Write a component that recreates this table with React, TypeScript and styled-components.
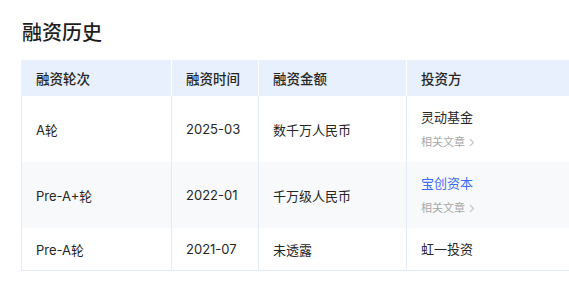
import React from "react";
import styled, { createGlobalStyle } from "styled-components";

const Global = createGlobalStyle`
  html, body { margin: 0; padding: 0; background: #fff; overflow: hidden; }
  body { font-family: Inter, "Noto Sans CJK SC", sans-serif; color: #222; }
`;

const Page = styled.div`
  padding: 19px 0 0 21px;
  width: 640px;
`;

const Title = styled.h2`
  margin: 0 0 0 1px;
  font-size: 20px;
  line-height: 26px;
  font-weight: 500;
  color: #1e1e1e;
  font-family: "Noto Sans CJK SC", sans-serif;
`;

const Table = styled.div`
  margin-top: 15px;
  display: grid;
  grid-template-columns: 149px 87px 148px 200px;
  border-left: 1px solid #e3ebf8;
  border-bottom: 1px solid #e3ebf8;
  width: 584px;
`;

const HeadCell = styled.div<{ $first?: boolean }>`
  height: 36px;
  display: flex;
  align-items: center;
  margin-left: ${(p) => (p.$first ? "-1px" : "0")};
  padding: 0 14px 0 ${(p) => (p.$first ? "15px" : "14px")};
  border-left: ${(p) => (p.$first ? "none" : "1px solid #fff")};
  background: #e8f0fd;
  font-family: "Noto Sans CJK SC", sans-serif;
  font-size: 13.5px;
  font-weight: 500;
  color: #262626;
`;

const Cell = styled.div<{ $first?: boolean; $shade?: boolean; $tall?: boolean }>`
  min-height: ${(p) => (p.$tall ? "66px" : "42px")};
  box-sizing: border-box;
  display: flex;
  flex-direction: column;
  justify-content: center;
  padding: 0 14px;
  border-left: ${(p) => (p.$first ? "none" : "1px solid #e3ebf8")};
  background: ${(p) => (p.$shade ? "#f7f9fa" : "#fff")};
  font-size: 13px;
  color: #262626;
`;

const Name = styled.span<{ $link?: boolean }>`
  font-size: 13px;
  line-height: 18px;
  color: ${(p) => (p.$link ? "#3e6df3" : "#262626")};
`;

const Article = styled.span`
  margin-top: 8px;
  font-size: 11px;
  line-height: 16px;
  color: #a8a8a8;
  display: flex;
  align-items: center;
  gap: 4px;
`;

const Chevron = () => (
  <svg width="6" height="9" viewBox="0 0 6 9" fill="none">
    <path d="M1 1l3.5 3.5L1 8" stroke="#c6c6c6" strokeWidth="1.1" />
  </svg>
);

type Row = { round: string; date: string; amount: string; investor: string; link?: boolean; article?: boolean };

const rows: Row[] = [
  { round: "A轮", date: "2025-03", amount: "数千万人民币", investor: "灵动基金", article: true },
  { round: "Pre-A+轮", date: "2022-01", amount: "千万级人民币", investor: "宝创资本", link: true, article: true },
  { round: "Pre-A轮", date: "2021-07", amount: "未透露", investor: "虹一投资" },
];

export default function App() {
  return (
    <>
      <Global />
      <Page>
        <Title>融资历史</Title>
        <Table>
          <HeadCell $first>融资轮次</HeadCell>
          <HeadCell>融资时间</HeadCell>
          <HeadCell>融资金额</HeadCell>
          <HeadCell>投资方</HeadCell>
          {rows.map((r, i) => {
            const shade = i === 1;
            const tall = !!r.article;
            return (
              <React.Fragment key={r.round}>
                <Cell $first $shade={shade} $tall={tall}>{r.round}</Cell>
                <Cell $shade={shade} $tall={tall}>{r.date}</Cell>
                <Cell $shade={shade} $tall={tall}>{r.amount}</Cell>
                <Cell $shade={shade} $tall={tall}>
                  <Name $link={r.link}>{r.investor}</Name>
                  {r.article && (
                    <Article>
                      相关文章 <Chevron />
                    </Article>
                  )}
                </Cell>
              </React.Fragment>
            );
          })}
        </Table>
      </Page>
    </>
  );
}
